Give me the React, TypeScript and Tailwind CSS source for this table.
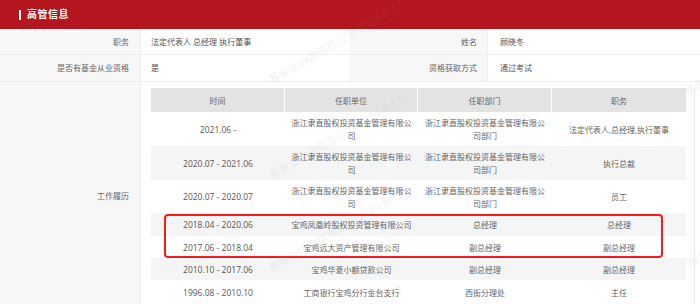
const cols = "grid grid-cols-[134px_133px_134px_134px]"

const history = [
  {
    time: "2021.06 -",
    org: "浙江隶直股权投资基金管理有限公司",
    dept: "浙江隶直股权投资基金管理有限公司部门",
    title: "法定代表人,总经理,执行董事",
    cls: "h-[34px] bg-white",
  },
  {
    time: "2020.07 - 2021.06",
    org: "浙江隶直股权投资基金管理有限公司",
    dept: "浙江隶直股权投资基金管理有限公司部门",
    title: "执行总裁",
    cls: "h-[34px] bg-[#f5f5f5]",
  },
  {
    time: "2020.07 - 2020.07",
    org: "浙江隶直股权投资基金管理有限公司",
    dept: "浙江隶直股权投资基金管理有限公司部门",
    title: "员工",
    cls: "h-[33px] bg-white",
  },
  {
    time: "2018.04 - 2020.06",
    org: "宝鸡凤凰岭股权投资管理有限公司",
    dept: "总经理",
    title: "总经理",
    cls: "h-[23px] bg-[#f5f5f5]",
  },
  {
    time: "2017.06 - 2018.04",
    org: "宝鸡远大资产管理有限公司",
    dept: "副总经理",
    title: "副总经理",
    cls: "h-[22px] bg-white",
  },
  {
    time: "2010.10 - 2017.06",
    org: "宝鸡华夏小额贷款公司",
    dept: "副总经理",
    title: "副总经理",
    cls: "h-[22px] bg-[#f5f5f5]",
  },
  {
    time: "1996.08 - 2010.10",
    org: "工商银行宝鸡分行金台支行",
    dept: "西街分理处",
    title: "主任",
    cls: "h-[24px] bg-white",
  },
]

// watermark anchors (bottom-left of each text run)
const marks = [
  { x: 272, y: 85 },
  { x: 272, y: 180 },
  { x: 272, y: 273 },
  { x: 272, y: 370 },
  { x: 688, y: 97 },
  { x: 690, y: 268 },
]

function InfoRow({ items, h }: { items: [string, string, string, string]; h: string }) {
  return (
    <div className={`flex ${h} border-b border-[#eeeeee]`}>
      <div className="w-[141px] bg-[#f7f7f7] border-r border-[#eeeeee] flex items-center justify-end pr-[11px] text-[#666]">
        {items[0]}
      </div>
      <div className="w-[209px] flex items-center pl-[10px] text-[#555]">{items[1]}</div>
      <div className="w-[138px] bg-[#f7f7f7] border-r border-[#eeeeee] flex items-center justify-end pr-[10px] text-[#666]">
        {items[2]}
      </div>
      <div className="flex-1 flex items-center pl-[12px] text-[#555]">{items[3]}</div>
    </div>
  )
}

export default function App() {
  return (
    <div className="relative w-[700px] h-[304px] overflow-hidden bg-white text-[8px] font-['Open_Sans','Noto_Sans_CJK_SC',sans-serif]">
      {/* Title bar */}
      <div className="h-[29px] bg-[#b4161f] flex items-center pl-[19px] gap-[6px]">
        <span className="w-[2px] h-[10px] bg-white" />
        <span className="text-white text-[10px] font-bold tracking-[0.5px]">高管信息</span>
      </div>

      <InfoRow items={["职务", "法定代表人 总经理 执行董事", "姓名", "顾晓冬"]} h="h-[26px]" />
      <InfoRow items={["是否有基金从业资格", "是", "资格获取方式", "通过考试"]} h="h-[27px]" />

      {/* Work history */}
      <div className="flex">
        <div className="w-[141px] bg-[#f7f7f7] border-r border-[#eeeeee] flex items-center justify-end pr-[11px] text-[#666]">
          工作履历
        </div>
        <div className="flex-1 flex pt-[6px] pl-[10px] pb-[6px]">
          <div className="w-[535px] leading-[13px]">
            <div className={`${cols} h-[24px] bg-[#e3e3e3] text-[#666] text-center`}>
              <div className="flex items-center justify-center border-r border-white">时间</div>
              <div className="flex items-center justify-center border-r border-white">任职单位</div>
              <div className="flex items-center justify-center border-r border-white">任职部门</div>
              <div className="flex items-center justify-center">职务</div>
            </div>
            {history.map((r, i) => (
              <div key={i} className={`${cols} ${r.cls} items-center text-center text-[#666]`}>
                <div className="px-[4px] text-[#555] text-[8.5px]">{r.time}</div>
                <div className="px-[4px]">{r.org}</div>
                <div className="px-[4px]">{r.dept}</div>
                <div className="px-[4px]">{r.title}</div>
              </div>
            ))}
          </div>
          <div className="w-[9px] border-r border-[#ececec]" />
        </div>
      </div>

      {/* highlight box */}
      <div className="absolute left-[164px] top-[214px] w-[499px] h-[44px] border-2 border-[#f41c1c] rounded-[4px] pointer-events-none" />

      {/* watermarks */}
      {marks.map((m, i) => (
        <span
          key={i}
          className="absolute whitespace-nowrap text-[11px] leading-none text-[rgba(150,150,150,0.15)] origin-bottom-left -rotate-[30deg] pointer-events-none select-none"
          style={{ left: m.x, top: m.y - 11 }}
        >
          基金业协会信息公示 2024-8-17
        </span>
      ))}
    </div>
  )
}
